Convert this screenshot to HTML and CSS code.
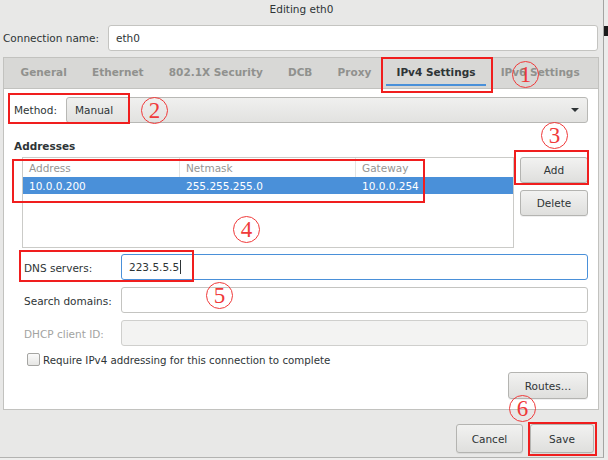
FILE: index.html
```html
<!DOCTYPE html>
<html>
<head>
<meta charset="utf-8">
<link rel="stylesheet" href="styles.css">
</head>
<body>
<div class="screen">
  <div class="window">
    <div class="titlebar">Editing eth0</div>
    <div class="conn-row">
      <span class="conn-label">Connection name:</span>
      <div class="entry conn-entry">eth0</div>
    </div>
    <div class="notebook">
      <div class="tabs">
        <span class="tab">General</span>
        <span class="tab">Ethernet</span>
        <span class="tab">802.1X Security</span>
        <span class="tab">DCB</span>
        <span class="tab">Proxy</span>
        <span class="tab active">IPv4 Settings</span>
        <span class="tab">IPv6 Settings</span>
      </div>
      <div class="page">
        <div class="method-row">
          <span class="method-label">Method:</span>
          <div class="combo"><span>Manual</span><span class="arrow"></span></div>
        </div>
        <div class="heading">Addresses</div>
        <div class="addr-row">
          <div class="tree">
            <div class="tree-head">
              <span class="col c1">Address</span>
              <span class="col c2">Netmask</span>
              <span class="col c3">Gateway</span>
            </div>
            <div class="tree-row selected">
              <span class="col c1">10.0.0.200</span>
              <span class="col c2">255.255.255.0</span>
              <span class="col c3">10.0.0.254</span>
            </div>
          </div>
          <div class="side-buttons">
            <div class="btn">Add</div>
            <div class="btn">Delete</div>
          </div>
        </div>
        <div class="form-grid">
          <span class="flabel">DNS servers:</span>
          <div class="entry focused">223.5.5.5<span class="caret"></span></div>
          <span class="flabel">Search domains:</span>
          <div class="entry"></div>
          <span class="flabel disabled">DHCP client ID:</span>
          <div class="entry disabled-entry"></div>
        </div>
        <div class="check-row">
          <span class="checkbox"></span>
          <span>Require IPv4 addressing for this connection to complete</span>
        </div>
        <div class="routes-row">
          <div class="btn routes">Routes…</div>
        </div>
      </div>
    </div>
    <div class="actions">
      <div class="btn cancel">Cancel</div>
      <div class="btn save">Save</div>
    </div>

    <div class="mark box1"></div>
    <div class="mark box2"></div>
    <div class="mark box3"></div>
    <div class="mark box4"></div>
    <div class="mark box5"></div>
    <div class="mark box6"></div>
    <span class="num n1">1</span>
    <span class="num n2">2</span>
    <span class="num n3">3</span>
    <span class="num n4">4</span>
    <span class="num n5">5</span>
    <span class="num n6">6</span>
  </div>
  <div class="edge"><span class="edge-block"></span></div>
</div>
</body>
</html>
```
FILE: styles.css
```css
* { box-sizing: border-box; }
html, body { margin: 0; padding: 0; }
body {
  width: 608px;
  height: 460px;
  overflow: hidden;
  background: #eeeeed;
  font-family: "DejaVu Sans", sans-serif;
  font-size: 10.5px;
  color: #2e3436;
}
.screen { display: flex; height: 460px; }
.window {
  position: relative;
  width: 604px;
  height: 458px;
  background: #e8e8e7;
  border-right: 1px solid #a4a4a2;
  border-bottom: 1px solid #b3b3b1;
  display: flex;
  flex-direction: column;
}
.edge { flex: 1; background: #ececeb; }
.edge-block { display: block; margin-top: 26px; height: 10px; background: #1a1a1a; }

.titlebar { height: 20px; line-height: 19px; text-align: center; }

.conn-row { display: flex; align-items: center; margin-top: 5px; height: 26px; padding-left: 3px; }
.conn-label { flex: 0 0 105px; }
.entry {
  height: 26px;
  background: #fff;
  border: 1px solid #c4c4c1;
  border-radius: 3px;
  padding-left: 7px;
  display: flex;
  align-items: center;
}
.conn-entry { width: 490px; }

.notebook {
  margin: 6px 0 0 3px;
  width: 596px;
  border: 1px solid #c2c2bf;
}
.tabs {
  height: 30px;
  background: #d8d8d6;
  display: flex;
  padding-left: 4px;
  overflow: hidden;
}
.tab {
  flex: 0 0 auto;
  white-space: nowrap;
  padding: 1px 12.6px 0 12.6px;
  font-weight: bold;
  color: #90918e;
  display: flex;
  align-items: center;
  border-bottom: 3px solid transparent;
}
.tab.active {
  color: #2e3436;
  border-bottom: none;
  background: linear-gradient(to top, #d8d8d6 0, #d8d8d6 2px, #4a90d9 2px, #4a90d9 4px, transparent 4px) no-repeat;
  background-size: calc(100% - 4px) 100%;
  background-position: 2px 0;
  padding-bottom: 3px;
}
.page {
  background: #fff;
  border-top: 1px solid #c2c2bf;
  padding: 8px 10px 10px 10px;
}
.method-row { display: flex; align-items: center; height: 26px; }
.method-label { width: 52px; }
.combo {
  flex: 1;
  height: 26px;
  border: 1px solid #b8b8b5;
  border-radius: 3px;
  background: linear-gradient(#f0f0ef, #e2e2e0);
  display: flex;
  align-items: center;
  justify-content: space-between;
  padding: 0 8px 0 8px;
}
.arrow {
  width: 0; height: 0;
  border-left: 4px solid transparent;
  border-right: 4px solid transparent;
  border-top: 4px solid #2e3436;
}
.heading { margin-top: 16px; height: 14px; line-height: 14px; font-weight: bold; }

.addr-row { display: flex; margin-top: 4px; height: 91px; }
.tree {
  margin-left: 8px;
  width: 492px;
  border: 1px solid #cbcbc8;
  background: #fff;
}
.tree-head, .tree-row { display: flex; }
.tree-head { height: 19px; color: #959593; }
.tree-head .col { border-right: 1px solid #e4e4e2; }
.tree-head .c3 { border-right: none; }
.tree-row { height: 17px; }
.tree-row.selected { background: #4a90d9; color: #fff; }
.col { display: flex; align-items: center; padding-left: 6px; }
.c1 { width: 157px; }
.c2 { width: 176px; }
.c3 { flex: 1; }

.side-buttons { margin-left: 6px; width: 68px; display: flex; flex-direction: column; gap: 7px; }
.btn {
  height: 26px;
  border: 1px solid #b4b4b1;
  border-radius: 3px;
  background: linear-gradient(#f2f2f1, #dfdfdd);
  display: flex;
  align-items: center;
  justify-content: center;
  box-shadow: 0 1px 0 rgba(0,0,0,0.06);
}

.form-grid {
  margin-top: 6px;
  padding-left: 10px;
  display: grid;
  grid-template-columns: 97px 1fr;
  row-gap: 7px;
  align-items: center;
}
.flabel { padding-top: 1px; }
.flabel.disabled { color: #a2a3a1; }
.entry.focused { border-color: #4a90d9; }
.caret { display: inline-block; width: 1px; height: 14px; background: #2e3436; margin-left: 1px; }
.disabled-entry { background: #f3f3f2; border-color: #cfcfcd; }

.check-row { display: flex; align-items: center; margin-top: 7px; height: 13px; padding-left: 13px; font-size: 10.25px; }
.checkbox {
  width: 13px; height: 13px;
  border: 1px solid #a5a5a2;
  border-radius: 2px;
  background: linear-gradient(#fafafa, #e6e6e4);
  margin-right: 3px;
}
.routes-row { display: flex; justify-content: flex-end; margin-top: 6px; }
.btn.routes { width: 80px; height: 27px; }

.actions { display: flex; justify-content: flex-end; gap: 7px; margin-top: 14px; padding-right: 9px; }
.btn.cancel { width: 67px; height: 29px; }
.btn.save { width: 64px; height: 29px; }

.mark { position: absolute; border: 2px solid #f01e1e; }
.box1 { left: 381px; top: 57px; width: 112px; height: 36px; }
.box2 { left: 8px; top: 93px; width: 122px; height: 31px; }
.box3 { left: 514px; top: 150px; width: 75px; height: 35px; }
.box4 { left: 12px; top: 159px; width: 413px; height: 44px; }
.box5 { left: 19px; top: 250px; width: 175px; height: 32px; }
.box6 { left: 528px; top: 422px; width: 69px; height: 34px; }

.num {
  position: absolute;
  width: 27px; height: 27px;
  border: 1px solid #f03a3a;
  border-radius: 50%;
  color: #f03a3a;
  font-family: "Liberation Serif", serif;
  font-size: 23px;
  line-height: 26px;
  text-align: center;
}
.n1 { left: 512px; top: 61px; }
.n2 { left: 141px; top: 97px; }
.n3 { left: 541px; top: 122px; }
.n4 { left: 233px; top: 216px; }
.n5 { left: 206px; top: 282px; }
.n6 { left: 509px; top: 395px; }
```
